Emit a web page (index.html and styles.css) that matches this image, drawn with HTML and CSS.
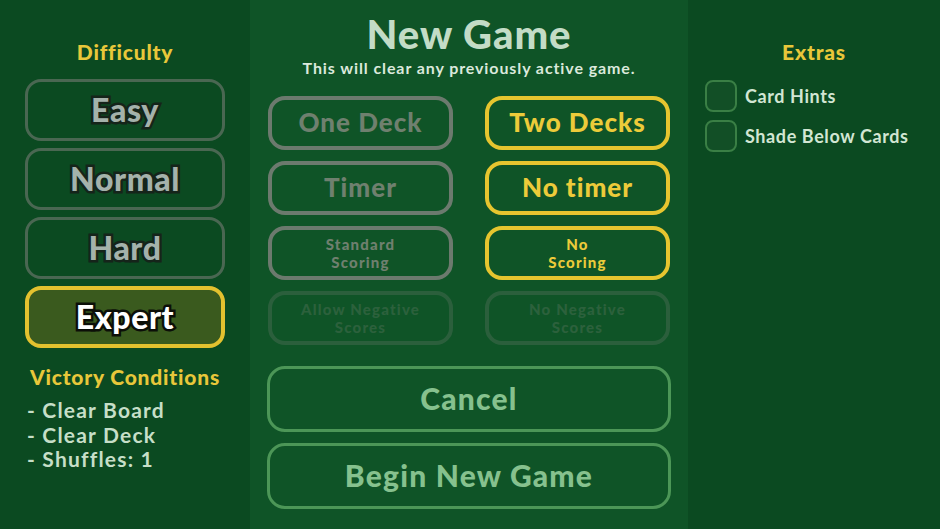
FILE: index.html
```html
<!DOCTYPE html>
<html lang="en">
<head>
<meta charset="utf-8">
<title>New Game</title>
<link rel="stylesheet" href="styles.css">
</head>
<body>
<div class="screen">
  <aside class="side left">
    <div class="label">Difficulty</div>
    <div class="diff-list">
      <div class="diff">Easy</div>
      <div class="diff">Normal</div>
      <div class="diff">Hard</div>
      <div class="diff selected">Expert</div>
    </div>
    <div class="label victory">Victory Conditions</div>
    <ul class="conditions">
      <li>- Clear Board</li>
      <li>- Clear Deck</li>
      <li>- Shuffles: 1</li>
    </ul>
  </aside>
  <main class="center">
    <h1 class="title">New Game</h1>
    <p class="subtitle">This will clear any previously active game.</p>
    <div class="options">
      <div class="opt">One Deck</div>
      <div class="opt on">Two Decks</div>
      <div class="opt">Timer</div>
      <div class="opt on">No timer</div>
      <div class="opt small"><span class="ln">Standard</span><span class="ln">Scoring</span></div>
      <div class="opt small on"><span class="ln">No</span><span class="ln">Scoring</span></div>
      <div class="opt small faded"><span class="ln">Allow Negative</span><span class="ln">Scores</span></div>
      <div class="opt small faded"><span class="ln">No Negative</span><span class="ln">Scores</span></div>
    </div>
    <div class="actions">
      <div class="action">Cancel</div>
      <div class="action">Begin New Game</div>
    </div>
  </main>
  <aside class="side right">
    <div class="label">Extras</div>
    <div class="checks">
      <div class="check"><span class="box"></span><span>Card Hints</span></div>
      <div class="check"><span class="box"></span><span>Shade Below Cards</span></div>
    </div>
  </aside>
</div>
</body>
</html>
```
FILE: styles.css
```css
* { box-sizing: border-box; }
html, body { margin: 0; padding: 0; }
body {
  background: #0b4a21;
  font-family: Lato, "Open Sans", sans-serif;
  font-weight: 700;
}
.screen {
  width: 940px;
  height: 529px;
  display: flex;
  overflow: hidden;
}
.side {
  background: #0b4a21;
  display: flex;
  flex-direction: column;
}
.left {
  width: 250px;
  align-items: center;
  padding-top: 39px;
}
.right {
  width: 252px;
  padding-top: 39px;
}
.label {
  font-size: 21px;
  line-height: 25px;
  font-weight: 900;
  letter-spacing: 0.8px;
  color: #e8c73a;
  text-align: center;
}
.diff-list {
  margin-top: 15px;
  width: 200px;
  display: flex;
  flex-direction: column;
  gap: 7px;
}
.diff {
  height: 62px;
  border: 3px solid #4a6752;
  border-radius: 16px;
  display: flex;
  align-items: center;
  justify-content: center;
  font-size: 32px;
  font-weight: 900;
  letter-spacing: 0.6px;
  color: #a4b2ab;
  -webkit-text-stroke: 5px #15241a;
  paint-order: stroke fill;
  padding-bottom: 2px;
}
.diff.selected {
  border: 4px solid #e3c12f;
  background: #3a5a1e;
  color: #ffffff;
  -webkit-text-stroke: 5px #0c0f08;
}
.victory {
  margin-top: 16px;
}
.conditions {
  align-self: stretch;
  list-style: none;
  margin: 9px 0 0;
  padding: 0 0 0 27px;
  font-size: 21px;
  line-height: 24.5px;
  letter-spacing: 1.2px;
  color: #c6dfc8;
}
.center {
  width: 438px;
  background: #0f5427;
  display: flex;
  flex-direction: column;
  align-items: center;
  padding-top: 12px;
}
.title {
  margin: 0;
  font-size: 40px;
  line-height: 44px;
  font-weight: 900;
  letter-spacing: 1px;
  color: #c3dcc6;
}
.subtitle {
  margin: 3px 0 0;
  font-size: 16px;
  line-height: 18px;
  letter-spacing: 0.9px;
  color: #dbe9dc;
}
.options {
  margin-top: 19px;
  display: grid;
  grid-template-columns: 185px 185px;
  grid-auto-rows: 54px;
  column-gap: 32px;
  row-gap: 11px;
}
.opt {
  border: 4px solid #6c7a6e;
  border-radius: 17px;
  display: flex;
  align-items: center;
  justify-content: center;
  text-align: center;
  font-size: 26px;
  font-weight: 900;
  letter-spacing: 1px;
  color: #6f806f;
  padding-bottom: 2px;
}
.opt.small {
  flex-direction: column;
  font-size: 15px;
  letter-spacing: 1.2px;
  padding-bottom: 0;
}
.ln {
  display: block;
  height: 18px;
  line-height: 18px;
}
.opt.on {
  border-color: #e6c52f;
  color: #eccb3a;
}
.opt.faded {
  opacity: 0.3;
}
.actions {
  margin-top: 21px;
  display: flex;
  flex-direction: column;
  gap: 11px;
  width: 404px;
}
.action {
  height: 66px;
  border: 3px solid #4c9657;
  border-radius: 18px;
  display: flex;
  align-items: center;
  justify-content: center;
  font-size: 30px;
  font-weight: 900;
  letter-spacing: 1.2px;
  color: #86c18e;
  padding-bottom: 2px;
}
.checks {
  margin-top: 16px;
  padding-left: 17px;
  display: flex;
  flex-direction: column;
  gap: 8px;
}
.check {
  display: flex;
  align-items: center;
  gap: 8px;
  font-size: 18px;
  letter-spacing: 0.6px;
  color: #d2e6d3;
}
.box {
  width: 32px;
  height: 32px;
  border: 2px solid #3a7f45;
  border-radius: 8px;
  background: #124f26;
}
```
